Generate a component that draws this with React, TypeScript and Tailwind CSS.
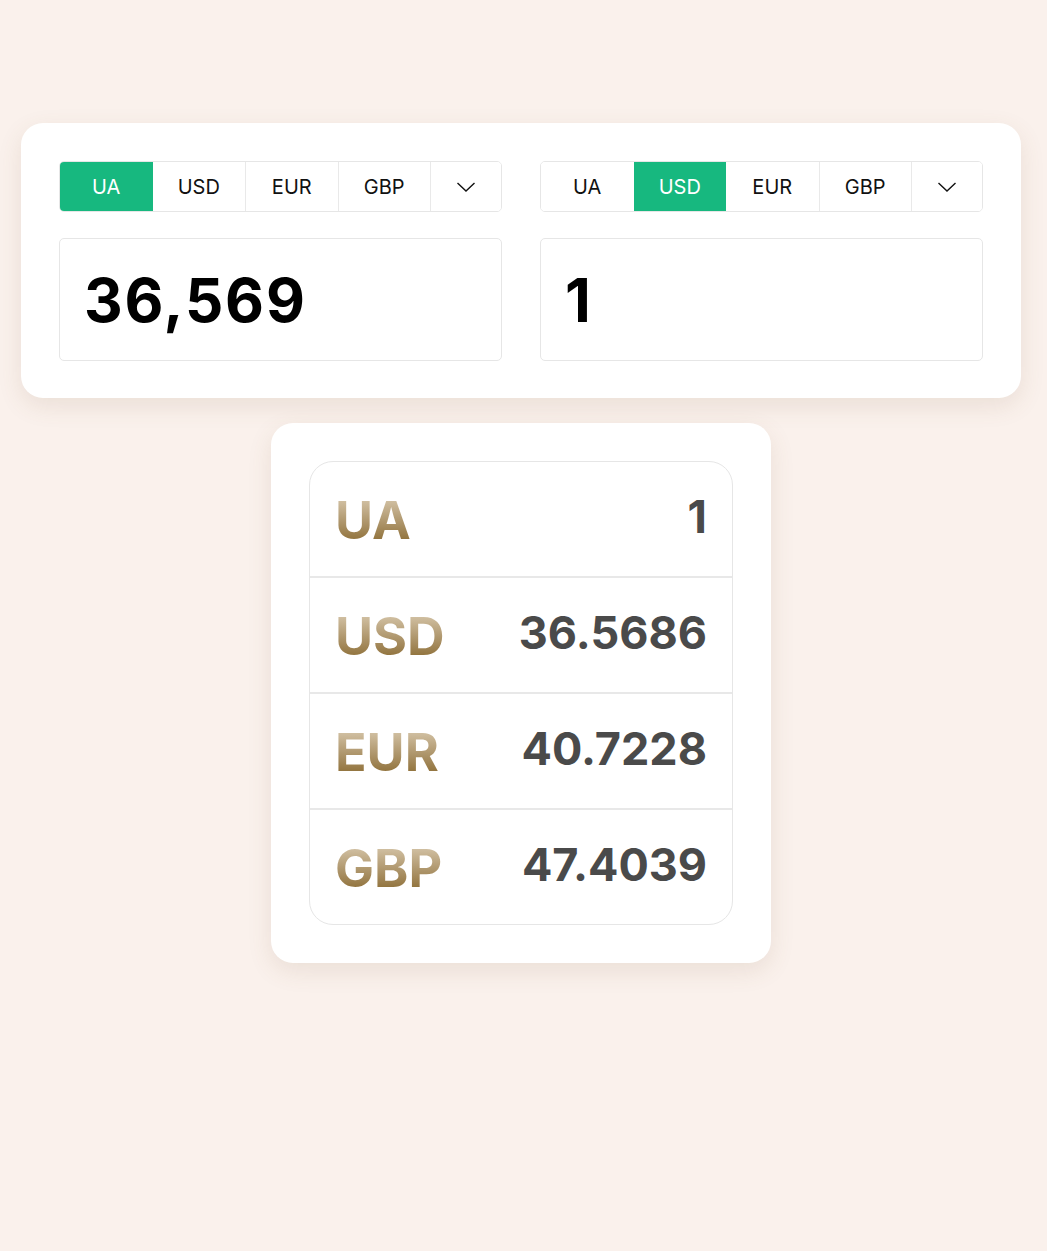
import React from "react";

const tabs = ["UA", "USD", "EUR", "GBP"];

function Chevron() {
  return (
    <svg width="20" height="12" viewBox="0 0 20 12" fill="none">
      <path d="M1.5 2 L10 10 L18.5 2" stroke="#111" strokeWidth="1.4" />
    </svg>
  );
}

function Tabs({ active }: { active: number }) {
  return (
    <div className="grid grid-cols-[1fr_1fr_1fr_1fr_71px] h-[51px] rounded-[5px] border border-[#e6e6e6] overflow-hidden">
      {tabs.map((t, i) => (
        <div
          key={t}
          className={
            "flex items-center justify-center text-[20px] " +
            (i === active
              ? "bg-[#17b87f] text-white"
              : "bg-white text-[#111]") +
            (i > 0 && i !== active && i - 1 !== active ? " border-l border-[#e9e9e9]" : "")
          }
        >
          {t}
        </div>
      ))}
      <div className="flex items-center justify-center border-l border-[#e9e9e9] bg-white">
        <Chevron />
      </div>
    </div>
  );
}

function Side({ active, value }: { active: number; value: string }) {
  return (
    <div className="flex flex-col gap-[26px]">
      <Tabs active={active} />
      <div className="h-[123px] rounded-[5px] border border-[#e6e6e6] bg-white flex items-center pl-[24px]">
        <span className="text-[60px] font-bold tracking-[0.03em] text-black leading-none">
          {value}
        </span>
      </div>
    </div>
  );
}

const rates = [
  ["UA", "1"],
  ["USD", "36.5686"],
  ["EUR", "40.7228"],
  ["GBP", "47.4039"],
];

export default function App() {
  return (
    <div
      className="min-h-[1251px] bg-[#faf1ec] pt-[123px]"
      style={{ fontFamily: "Inter, sans-serif" }}
    >
      <div className="w-[1000px] ml-[21px] flex flex-col gap-[25px]">
        <div className="bg-white rounded-[22px] shadow-[0_8px_24px_rgba(120,90,60,0.12)] px-[38px] pt-[38px] pb-[37px] grid grid-cols-2 gap-[38px]">
          <Side active={0} value="36,569" />
          <Side active={1} value="1" />
        </div>
        <div className="mx-auto w-[500px] bg-white rounded-[22px] shadow-[0_8px_24px_rgba(120,90,60,0.12)] p-[38px]">
          <div className="rounded-[24px] border border-[#e6e6e6] overflow-hidden">
            {rates.map(([c, v], i) => (
              <div
                key={c}
                className={
                  "flex items-center justify-between px-[25px]" +
                  (i > 0 ? " h-[116px] border-t-2 border-[#e8e8e8]" : " h-[114px]")
                }
              >
                <span className="text-[52px] font-bold leading-none bg-gradient-to-b from-[#e0d2ba] to-[#87672a] bg-clip-text text-transparent pt-[4px]">
                  {c}
                </span>
                <span className="text-[45px] font-bold leading-none text-[#4a4a4a] pb-[6px]">
                  {v}
                </span>
              </div>
            ))}
          </div>
        </div>
      </div>
    </div>
  );
}
